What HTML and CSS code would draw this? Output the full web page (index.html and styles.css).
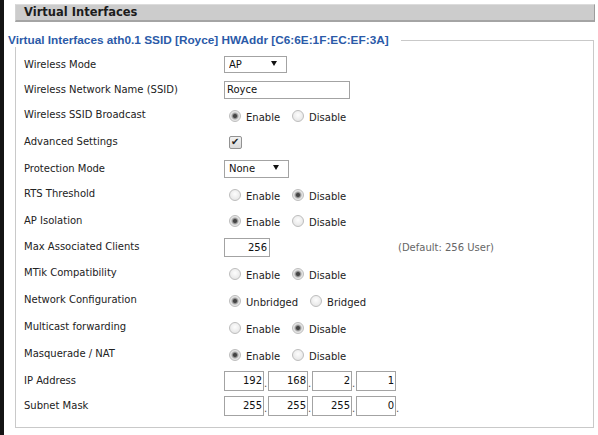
FILE: index.html
```html
<!DOCTYPE html>
<html>
<head>
<meta charset="utf-8">
<title>Virtual Interfaces</title>
<link rel="stylesheet" href="styles.css">
</head>
<body>
<div class="page">
  <div class="edge"></div>
  <div class="main">
    <h2 class="bar">Virtual Interfaces</h2>
    <fieldset class="vif">
      <legend>Virtual Interfaces ath0.1 SSID [Royce] HWAddr [C6:6E:1F:EC:EF:3A]</legend>

      <div class="row r25">
        <span class="lbl">Wireless Mode</span>
        <div class="ctl"><span class="sel"><select class="w63"><option>AP</option></select></span></div>
      </div>

      <div class="row r25">
        <span class="lbl">Wireless Network Name (SSID)</span>
        <div class="ctl"><input class="txt ssid" type="text" value="Royce"></div>
      </div>

      <div class="row">
        <span class="lbl">Wireless SSID Broadcast</span>
        <div class="ctl">
          <label class="opt"><input type="radio" name="bc" checked>Enable</label>
          <label class="opt"><input type="radio" name="bc">Disable</label>
        </div>
      </div>

      <div class="row">
        <span class="lbl">Advanced Settings</span>
        <div class="ctl"><input class="chk" type="checkbox" checked></div>
      </div>

      <div class="row r25">
        <span class="lbl">Protection Mode</span>
        <div class="ctl"><span class="sel"><select class="w65"><option>None</option></select></span></div>
      </div>

      <div class="row">
        <span class="lbl">RTS Threshold</span>
        <div class="ctl">
          <label class="opt"><input type="radio" name="rts">Enable</label>
          <label class="opt"><input type="radio" name="rts" checked>Disable</label>
        </div>
      </div>

      <div class="row r26">
        <span class="lbl">AP Isolation</span>
        <div class="ctl">
          <label class="opt"><input type="radio" name="api" checked>Enable</label>
          <label class="opt"><input type="radio" name="api">Disable</label>
        </div>
      </div>

      <div class="row r26">
        <span class="lbl">Max Associated Clients</span>
        <div class="ctl"><input class="txt num" type="text" value="256"><span class="hint">(Default: 256 User)</span></div>
      </div>

      <div class="row">
        <span class="lbl">MTik Compatibility</span>
        <div class="ctl">
          <label class="opt"><input type="radio" name="mtik">Enable</label>
          <label class="opt"><input type="radio" name="mtik" checked>Disable</label>
        </div>
      </div>

      <div class="row">
        <span class="lbl">Network Configuration</span>
        <div class="ctl">
          <label class="opt"><input type="radio" name="net" checked>Unbridged</label>
          <label class="opt"><input type="radio" name="net">Bridged</label>
        </div>
      </div>

      <div class="row">
        <span class="lbl">Multicast forwarding</span>
        <div class="ctl">
          <label class="opt"><input type="radio" name="mc">Enable</label>
          <label class="opt"><input type="radio" name="mc" checked>Disable</label>
        </div>
      </div>

      <div class="row">
        <span class="lbl">Masquerade / NAT</span>
        <div class="ctl">
          <label class="opt"><input type="radio" name="nat" checked>Enable</label>
          <label class="opt"><input type="radio" name="nat">Disable</label>
        </div>
      </div>

      <div class="row r25">
        <span class="lbl">IP Address</span>
        <div class="ctl">
          <input class="txt ip" type="text" value="192"><span class="dot">.</span><input class="txt ip" type="text" value="168"><span class="dot">.</span><input class="txt ip" type="text" value="2"><span class="dot">.</span><input class="txt ip" type="text" value="1">
        </div>
      </div>

      <div class="row r25">
        <span class="lbl">Subnet Mask</span>
        <div class="ctl">
          <input class="txt ip" type="text" value="255"><span class="dot">.</span><input class="txt ip" type="text" value="255"><span class="dot">.</span><input class="txt ip" type="text" value="255"><span class="dot">.</span><input class="txt ip" type="text" value="0"><span class="dot">.</span>
        </div>
      </div>
    </fieldset>
  </div>
</div>
</body>
</html>
```
FILE: styles.css
```css
html, body {
  margin: 0;
  height: 100%;
}
body {
  font-family: "DejaVu Sans", Verdana, sans-serif;
  font-size: 10px;
  color: #222;
  background: #fff;
}
.page {
  display: flex;
  min-height: 100%;
}
.edge {
  flex: none;
  width: 4px;
  background: #141414;
}
.main {
  flex: 1;
  padding: 4px 3px 0 11px;
}
.bar {
  margin: 0;
  height: 15px;
  line-height: 15px;
  padding-left: 8px;
  background: #cccccc;
  border-top: 1px solid #dcdcdc;
  border-left: 1px solid #d4d4d4;
  border-right: 1px solid #9c9c9c;
  border-bottom: 2px solid #a4a4a4;
  font-family: "DejaVu Sans", sans-serif;
  font-weight: bold;
  font-size: 11.5px;
  color: #1c1c1c;
}
.vif {
  margin: 11px 1px 0 0;
  padding: 5px 0 9px 8px;
  border: 1px solid #c9c9c9;
}
.vif legend {
  margin-left: -16px;
  padding: 0 12px 0 0;
  font-family: "Liberation Sans", Arial, sans-serif;
  font-weight: bold;
  font-size: 11.8px;
  line-height: 14px;
  color: #2b5aa8;
}
.row {
  display: grid;
  grid-template-columns: 200px auto;
  align-items: center;
  height: 27px;
}
.row.r25 { height: 25px; }
.row.r26 { height: 26px; }
.lbl {
  align-self: start;
  padding-top: 1px;
  line-height: 24px;
}
.ctl {
  display: flex;
  align-items: center;
}
.sel {
  position: relative;
  display: inline-block;
}
.sel select {
  -webkit-appearance: none;
  appearance: none;
  box-sizing: border-box;
  margin: 0;
  height: 17px;
  padding: 0 0 0 4px;
  border: 1px solid #a3a3a3;
  border-radius: 0;
  background: #fff;
  font: 10px "DejaVu Sans", Verdana, sans-serif;
  color: #111;
}
.sel select.w63 { width: 63px; }
.sel select.w65 { width: 65px; height: 18px; }
.sel::after {
  content: "";
  position: absolute;
  top: 5px;
  right: 10px;
  border-style: solid;
  border-color: #111 transparent transparent;
  border-width: 5px 3px 0;
  pointer-events: none;
}
.txt {
  box-sizing: border-box;
  margin: 0;
  height: 18px;
  padding: 0 2px;
  border: 1px solid #a3a3a3;
  border-radius: 0;
  background: #fff;
  font: 10px "DejaVu Sans", Verdana, sans-serif;
  color: #111;
}
.ssid { width: 126px; }
.num {
  width: 46px;
  height: 19px;
  text-align: right;
}
.ip {
  width: 40px;
  height: 20px;
  padding: 0 1px 0 0;
  text-align: right;
}
.dot {
  width: 4px;
  align-self: flex-end;
  line-height: 14px;
  color: #555;
}
.hint {
  margin-left: 128px;
  color: #666;
}
.opt {
  display: inline-flex;
  align-items: center;
  margin-right: 7px;
  padding-top: 3px;
}
.opt input {
  -webkit-appearance: none;
  appearance: none;
  box-sizing: border-box;
  width: 12px;
  height: 12px;
  margin: -3px 5px 0 5px;
  border: 1px solid #bdbdbd;
  border-radius: 50%;
  background: radial-gradient(circle at 50% 40%, #fdfdfd, #e0e0e0);
}
.opt input:checked {
  background: radial-gradient(circle, #444 0 1.5px, #909090 2.5px, #e2e2e2 4px, #f2f2f2);
}
.chk {
  -webkit-appearance: none;
  appearance: none;
  position: relative;
  box-sizing: border-box;
  width: 13px;
  height: 13px;
  margin: 0 0 0 5px;
  border: 1px solid #929292;
  border-radius: 2px;
  background: linear-gradient(#f2f2f2, #dadada);
}
.chk:checked::after {
  content: "\2714";
  position: absolute;
  left: 1px;
  top: -1px;
  font: 10px "DejaVu Sans", sans-serif;
  color: #222;
}
```
